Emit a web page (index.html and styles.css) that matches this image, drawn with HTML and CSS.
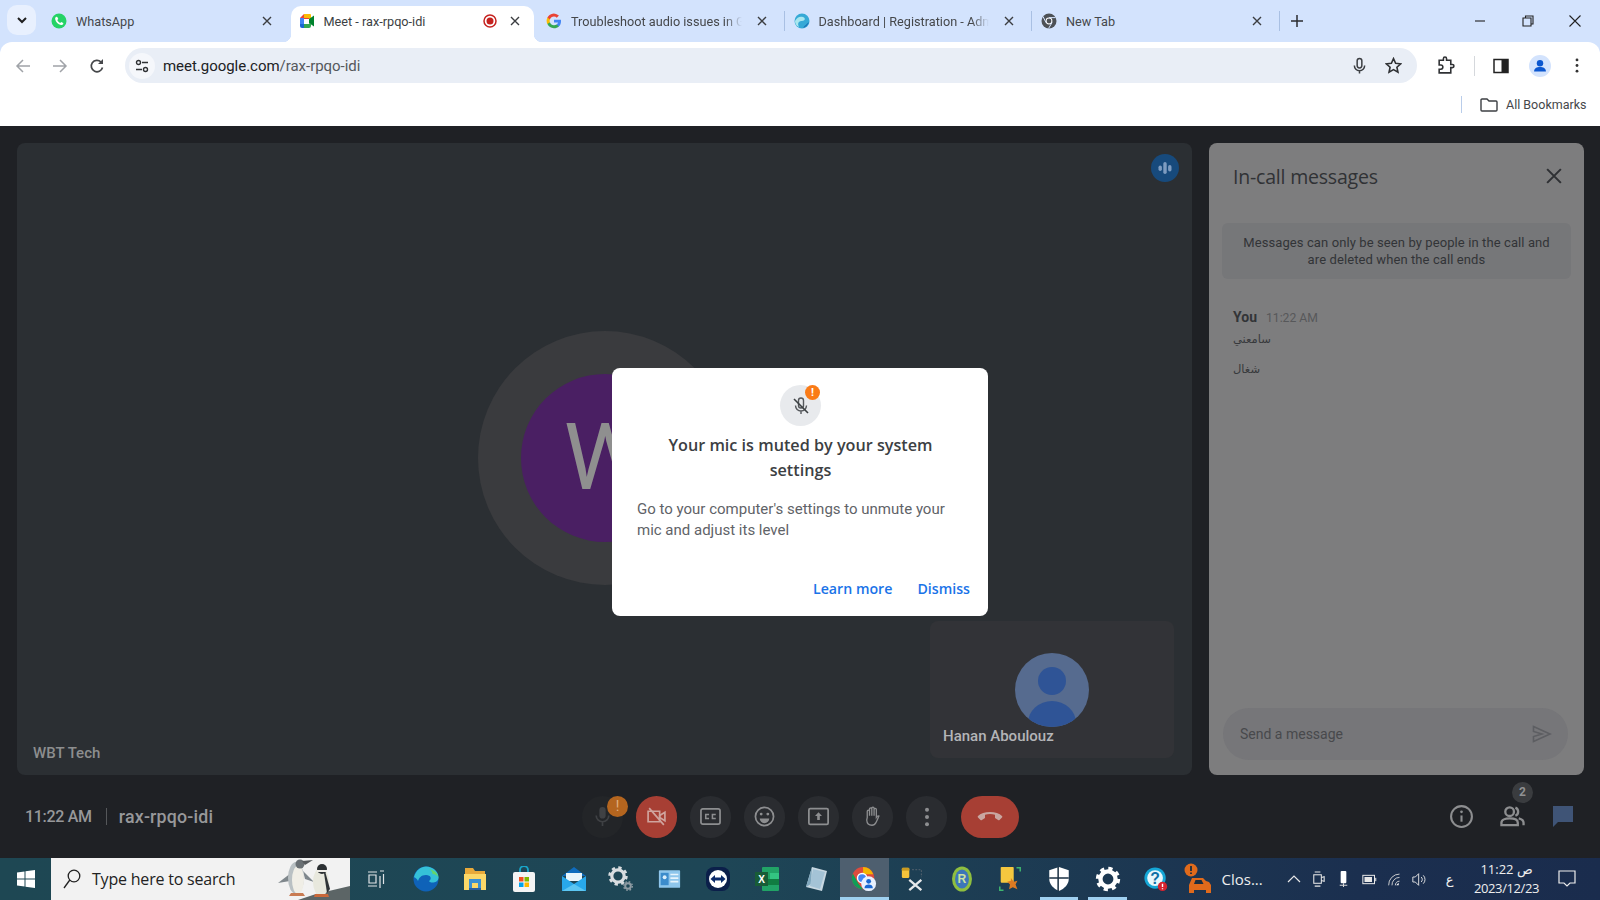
FILE: index.html
```html
<!DOCTYPE html>
<html lang="en">
<head>
<meta charset="utf-8">
<title>Meet - rax-rpqo-idi</title>
<link rel="stylesheet" href="styles.css">
</head>
<body>
<div class="browser">
  <div class="tabstrip">
    <div class="tabsearch"><svg width="12" height="12" viewBox="0 0 12 12"><path d="M2 4l4 4 4-4" fill="none" stroke="#1f1f1f" stroke-width="2"/></svg></div>
    <div class="tab">
      <svg class="favicon" viewBox="0 0 16 16"><circle cx="8" cy="8" r="7.5" fill="#25d366"/><path d="M5.2 3.8c-.8.5-1.2 1.4-1 2.4.5 2.8 2.900 5.200 5.700 5.700 1 .2 1.900-.2 2.400-1l-.1-1-2-1-1 1c-1.200-.5-2.400-1.700-2.900-2.900l1-1-1-2z" fill="#fff"/></svg>
      <span class="tab-title">WhatsApp</span>
      <svg class="tab-x" viewBox="0 0 10 10"><path d="M1 1l8 8M9 1l-8 8"/></svg>
    </div>
    <div class="tab tab-active">
      <svg class="favicon" viewBox="0 0 16 16"><path d="M1 5l4-4h5v5H1z" fill="#ea4335"/><path d="M1 5h4v6H1z" fill="#4285f4"/><path d="M1 11h4v4H3a2 2 0 0 1-2-2z" fill="#1967d2"/><path d="M5 11h5v4H5z" fill="#34a853"/><path d="M5 1h6a1 1 0 0 1 1 1v4H10V5H5z" fill="#fbbc04"/><path d="M10 6l5-3.500v11L10 10z" fill="#00832d"/><path d="M10 10v3a2 2 0 0 1-2 2h2a2 2 0 0 0 2-2v-2z" fill="#34a853"/></svg>
      <span class="tab-title">Meet - rax-rpqo-idi</span>
      <svg class="rec" viewBox="0 0 14 14"><circle cx="7" cy="7" r="6" fill="none" stroke="#c5221f" stroke-width="1.500"/><circle cx="7" cy="7" r="3.500" fill="#c5221f"/></svg>
      <svg class="tab-x" viewBox="0 0 10 10"><path d="M1 1l8 8M9 1l-8 8"/></svg>
    </div>
    <div class="tab tab-sep">
      <svg class="favicon" viewBox="0 0 16 16"><path d="M15 8.200c0-.5 0-1-.1-1.500H8v2.800h4a3.400 3.400 0 0 1-1.500 2.200v1.900h2.400c1.400-1.300 2.100-3.200 2.100-5.400z" fill="#4285f4"/><path d="M8 15.200c2 0 3.600-.7 4.900-1.800l-2.400-1.900c-.7.4-1.500.7-2.500.7-1.900 0-3.500-1.300-4.100-3H1.400v1.900a7.200 7.200 0 0 0 6.600 4.100z" fill="#34a853"/><path d="M3.900 9.200a4.300 4.300 0 0 1 0-2.700V4.600H1.400a7.200 7.200 0 0 0 0 6.500z" fill="#fbbc04"/><path d="M8 3.600c1.100 0 2 .4 2.800 1.100l2.100-2.100A7.200 7.200 0 0 0 1.400 4.600l2.500 1.900c.6-1.700 2.200-2.900 4.100-2.900z" fill="#ea4335"/></svg>
      <span class="tab-title tab-fade">Troubleshoot audio issues in Go</span>
      <svg class="tab-x" viewBox="0 0 10 10"><path d="M1 1l8 8M9 1l-8 8"/></svg>
    </div>
    <div class="tab tab-sep">
      <svg class="favicon" viewBox="0 0 16 16"><circle cx="8" cy="8" r="7.500" fill="#35a9d6"/><path d="M1 8c2-4 5-5 8-4 3 1 2 4-1 4S3 10 5 14C2 13 1 10 1 8z" fill="#a8e6ee"/><path d="M9 15c3-1 5-3 6-6-2 2-4 3-6 6z" fill="#1a6fb5"/></svg>
      <span class="tab-title tab-fade">Dashboard | Registration - Adm</span>
      <svg class="tab-x" viewBox="0 0 10 10"><path d="M1 1l8 8M9 1l-8 8"/></svg>
    </div>
    <div class="tab tab-sep">
      <svg class="favicon" viewBox="0 0 16 16"><circle cx="8" cy="8" r="7.500" fill="#4d5156"/><circle cx="8" cy="8" r="3.400" fill="#fff"/><circle cx="8" cy="8" r="2.400" fill="#4d5156"/><path d="M8 4.600h6.500M5 9.600L2 3.500M11 9.600l-3.400 5.800" stroke="#d3e3fd" stroke-width="1"/></svg>
      <span class="tab-title">New Tab</span>
      <svg class="tab-x" viewBox="0 0 10 10"><path d="M1 1l8 8M9 1l-8 8"/></svg>
    </div>
    <svg class="newtab" viewBox="0 0 12 12"><path d="M6 0v12M0 6h12" stroke="#2b2d30" stroke-width="1.500"/></svg>
    <div class="window-controls">
      <svg viewBox="0 0 12 12"><path d="M1 6h10" stroke="#222" stroke-width="1.100"/></svg>
      <svg viewBox="0 0 12 12"><path d="M3.500 2.500V1h7.500v8H9.500M1 3h8v8H1z" fill="none" stroke="#222" stroke-width="1.100"/></svg>
      <svg viewBox="0 0 12 12"><path d="M.5.500l11 11M11.500.500l-11 11" stroke="#222" stroke-width="1.100"/></svg>
    </div>
  </div>
  <div class="toolbar">
    <svg class="nav-icon" viewBox="0 0 16 16"><path d="M15 8H2M8 2L2 8l6 6" fill="none" stroke="#a0a3a8" stroke-width="1.500"/></svg>
    <svg class="nav-icon" viewBox="0 0 16 16"><path d="M1 8h13M8 2l6 6-6 6" fill="none" stroke="#a0a3a8" stroke-width="1.500"/></svg>
    <svg class="nav-icon" viewBox="0 0 16 16"><path d="M13.500 9.500A5.700 5.700 0 1 1 12 4l1.500 1.500" fill="none" stroke="#45474a" stroke-width="1.700"/><path d="M14 1v5h-5z" fill="#45474a"/></svg>
    <div class="omnibox">
      <div class="tune"><svg viewBox="0 0 14 14"><circle cx="3.500" cy="3.500" r="2" fill="none" stroke="#2f3134" stroke-width="1.400"/><circle cx="10.500" cy="10.500" r="2" fill="none" stroke="#2f3134" stroke-width="1.400"/><path d="M7 3.500h6M1 10.500h6" stroke="#2f3134" stroke-width="1.400"/></svg></div>
      <span class="url">meet.google.com<span class="url-path">/rax-rpqo-idi</span></span>
      <svg class="omni-mic" viewBox="0 0 16 18"><rect x="5.500" y="1" width="5" height="10" rx="2.500" fill="none" stroke="#3c3f43" stroke-width="1.600"/><path d="M2.500 8.500a5.500 5.500 0 0 0 11 0M8 14v3" fill="none" stroke="#3c3f43" stroke-width="1.600"/></svg>
      <svg class="omni-star" viewBox="0 0 16 16"><path d="M8 1.500l2 4.400 4.800.5-3.600 3.200 1 4.700L8 11.900l-4.200 2.400 1-4.700L1.200 6.400 6 5.900z" fill="none" stroke="#2f3134" stroke-width="1.500"/></svg>
    </div>
    <div class="toolbar-actions">
      <svg class="act-ext" viewBox="0 0 18 18"><path d="M3 4h4V2.500a1.500 1.500 0 0 1 3 0V4h4v4h1.500a1.500 1.500 0 0 1 0 3H14v5H3v-3.500h1.500a2 2 0 0 0 0-4H3z" fill="none" stroke="#2f3134" stroke-width="1.500"/></svg>
      <span class="act-sep"></span>
      <svg class="act-side" viewBox="0 0 16 16"><rect x="1" y="1.500" width="14" height="13" fill="none" stroke="#222" stroke-width="1.500"/><rect x="8.500" y="1.500" width="6.500" height="13" fill="#222"/></svg>
      <svg class="act-prof" viewBox="0 0 24 24"><circle cx="12" cy="12" r="12" fill="#d3e3fd"/><circle cx="12" cy="9" r="3.500" fill="#0b57d0"/><path d="M5.500 18c0-3.500 3-5 6.500-5s6.500 1.500 6.500 5z" fill="#0b57d0"/></svg>
      <svg class="act-menu" viewBox="0 0 4 16"><circle cx="2" cy="2" r="1.500" fill="#333"/><circle cx="2" cy="8" r="1.500" fill="#333"/><circle cx="2" cy="14" r="1.500" fill="#333"/></svg>
    </div>
  </div>
  <div class="bookmarks">
    <span class="bm-sep"></span>
    <svg class="bm-folder" viewBox="0 0 18 14"><path d="M1 2a1 1 0 0 1 1-1h5l2 2h7a1 1 0 0 1 1 1v8a1 1 0 0 1-1 1H2a1 1 0 0 1-1-1z" fill="none" stroke="#3c3f43" stroke-width="1.400"/></svg>
    <span class="bm-text">All Bookmarks</span>
  </div>
</div>

<main class="meet">
  <div class="meet-body">
    <section class="stage">
      <svg class="speaking" viewBox="0 0 28 28"><circle cx="14" cy="14" r="14" fill="#174a7c"/><rect x="7.500" y="11.500" width="3.400" height="5.500" rx="1.700" fill="#7e9cc0"/><rect x="12.300" y="8" width="3.400" height="12" rx="1.700" fill="#7e9cc0"/><rect x="17.100" y="11" width="3.400" height="6.500" rx="1.700" fill="#7e9cc0"/></svg>
      <div class="ring"><div class="avatar-big">W</div></div>
      <span class="self-name">WBT Tech</span>
      <div class="tile">
        <svg class="tile-avatar" viewBox="0 0 74 74"><defs><clipPath id="tc"><circle cx="37" cy="37" r="37"/></clipPath></defs><circle cx="37" cy="37" r="37" fill="#566b8f"/><g clip-path="url(#tc)"><ellipse cx="37" cy="28" rx="14" ry="14" fill="#2f5496"/><ellipse cx="37" cy="70" rx="24" ry="22" fill="#2f5496"/></g></svg>
        <span class="tile-name">Hanan Aboulouz</span>
      </div>
    </section>
    <aside class="chat">
      <div class="chat-head">
        <h2 class="chat-title">In-call messages</h2>
        <svg class="chat-close" viewBox="0 0 14 14"><path d="M1 1l12 12M13 1L1 13" stroke="#2e3033" stroke-width="1.800"/></svg>
      </div>
      <p class="chat-note">Messages can only be seen by people in the call and are deleted when the call ends</p>
      <div class="chat-msgs">
        <div class="msg-meta"><b class="msg-you">You</b><span class="msg-time">11:22 AM</span></div>
        <p class="msg" dir="rtl">سامعني</p>
        <p class="msg" dir="rtl">شغال</p>
      </div>
      <div class="chat-input">
        <span class="chat-ph">Send a message</span>
        <svg class="chat-send" viewBox="0 0 20 18"><path d="M1.500 1.500L18 9 1.500 16.500v-5L10 9 1.500 6.500z" fill="none" stroke="#5d5e62" stroke-width="1.600"/></svg>
      </div>
    </aside>
  </div>
  <div class="controls">
    <div class="meeting-info">
      <span class="mi-time">11:22 AM</span>
      <span class="mi-sep"></span>
      <span class="mi-code">rax-rpqo-idi</span>
    </div>
    <div class="center-controls">
      <div class="ctl ctl-mic">
        <svg viewBox="0 0 16 20" class="ctl-i"><rect x="5" y="1" width="6" height="11" rx="3" fill="#3f4144"/><path d="M2 9a6 6 0 0 0 12 0M8 15v4" fill="none" stroke="#3f4144" stroke-width="1.600"/></svg>
        <span class="ctl-warn">!</span>
      </div>
      <div class="ctl ctl-red"><svg class="ctl-i" viewBox="0 0 20 20"><path d="M2 5h11v10H2z" fill="none" stroke="#d0a49e" stroke-width="1.600"/><path d="M13 9l5-3v8l-5-3zM3 2l14 16" fill="none" stroke="#d0a49e" stroke-width="1.600"/></svg></div>
      <div class="ctl"><svg class="ctl-i" viewBox="0 0 22 18"><rect x="1" y="1" width="20" height="16" rx="2" fill="none" stroke="#8d8e90" stroke-width="1.800"/><path d="M9.500 7H6v4h3.500M16.500 7H13v4h3.500" fill="none" stroke="#8d8e90" stroke-width="1.600"/></svg></div>
      <div class="ctl"><svg class="ctl-i" viewBox="0 0 22 22"><circle cx="11" cy="11" r="9.500" fill="none" stroke="#8d8e90" stroke-width="1.800"/><circle cx="7.500" cy="8.500" r="1.500" fill="#8d8e90"/><circle cx="14.500" cy="8.500" r="1.500" fill="#8d8e90"/><path d="M6 13h10a5 5 0 0 1-10 0z" fill="#8d8e90"/></svg></div>
      <div class="ctl"><svg class="ctl-i" viewBox="0 0 24 20"><rect x="1" y="1" width="22" height="18" rx="1.500" fill="none" stroke="#8d8e90" stroke-width="2"/><path d="M12 5l4 4.500h-2.500V14h-3V9.500H8z" fill="#8d8e90"/></svg></div>
      <div class="ctl"><svg class="ctl-i" viewBox="0 0 20 24"><path d="M4 13V6a1.300 1.300 0 0 1 2.600 0v5V3.500a1.300 1.300 0 0 1 2.600 0V11V2.500a1.300 1.300 0 0 1 2.600 0V11V4a1.300 1.300 0 0 1 2.600 0v9c1-1.500 2-2 3-1.500-1 2-2 5-3.500 7.500-1 2-2.500 3-4.500 3-4 0-5.800-2.500-6-6z" fill="none" stroke="#8d8e90" stroke-width="1.500"/></svg></div>
      <div class="ctl"><svg class="ctl-dots" viewBox="0 0 6 22"><circle cx="3" cy="3" r="2.200" fill="#8d8e90"/><circle cx="3" cy="11" r="2.200" fill="#8d8e90"/><circle cx="3" cy="19" r="2.200" fill="#8d8e90"/></svg></div>
      <div class="ctl-end"><svg viewBox="0 0 26 12"><path d="M13 1C8 1 3.500 2.500 1 5c-.5.500-.5 1 0 1.500L3.500 9c.4.400 1 .4 1.400.1L8 7V3.800c1.500-.5 3.200-.8 5-.8s3.500.3 5 .8V7l3.100 2.100c.4.300 1 .3 1.400-.1L25 6.500c.5-.5.5-1 0-1.500C22.500 2.500 18 1 13 1z" fill="#c9a6a0"/></svg></div>
    </div>
    <div class="right-controls">
      <svg class="rc-i" viewBox="0 0 24 24"><circle cx="12" cy="12" r="10" fill="none" stroke="#8d8e90" stroke-width="2"/><path d="M12 11v6" stroke="#8d8e90" stroke-width="2"/><circle cx="12" cy="7.500" r="1.300" fill="#8d8e90"/></svg>
      <div class="people">
        <span class="people-badge">2</span>
        <svg class="rc-i" viewBox="0 0 26 24"><circle cx="10" cy="7" r="4.500" fill="none" stroke="#8d8e90" stroke-width="2.400"/><path d="M1.500 21v-2.500c0-3 4-4.500 8.500-4.500s8.500 1.500 8.500 4.500V21z" fill="none" stroke="#8d8e90" stroke-width="2.400"/><path d="M16 2.800a4.500 4.500 0 0 1 0 8.400M19.500 14c3 .8 5 2.300 5 4.500V21" fill="none" stroke="#8d8e90" stroke-width="2.400"/></svg>
      </div>
      <svg class="rc-chat" viewBox="0 0 22 24"><path d="M1 1h20v16H6l-5 5z" fill="#3f5476"/></svg>
    </div>
  </div>
  <div class="dialog" role="dialog">
    <div class="dialog-icon">
      <svg viewBox="0 0 20 20" class="dialog-mic"><rect x="7.500" y="2" width="5" height="10" rx="2.500" fill="none" stroke="#55585c" stroke-width="1.400"/><path d="M4.500 9.500a5.500 5.500 0 0 0 11 0M10 15v3" fill="none" stroke="#55585c" stroke-width="1.400"/><path d="M3 3l14 14" stroke="#3c4043" stroke-width="1.600"/></svg>
      <span class="dialog-badge">!</span>
    </div>
    <h3 class="dialog-title">Your mic is muted by your system settings</h3>
    <p class="dialog-text">Go to your computer's settings to unmute your mic and adjust its level</p>
    <div class="dialog-actions">
      <span class="dialog-btn">Learn more</span>
      <span class="dialog-btn">Dismiss</span>
    </div>
  </div>
</main>

<footer class="taskbar">
  <div class="tb-start"><svg viewBox="0 0 18 18"><path d="M0 2.500L7.500 1.500v7H0zM8.500 1.300L18 0v8.500H8.500zM0 9.500h7.500v7L0 15.500zM8.500 9.500H18V18l-9.500-1.300z" fill="#fff"/></svg></div>
  <div class="tb-search">
    <svg class="tb-mag" viewBox="0 0 18 20"><circle cx="11" cy="7" r="5.800" fill="none" stroke="#222" stroke-width="1.300"/><path d="M6.800 11L1 19" stroke="#222" stroke-width="1.300"/></svg>
    <span class="tb-search-text">Type here to search</span>
    <svg class="tb-art" viewBox="0 0 74 42"><path d="M22 42l18-6 34-8v14z" fill="#5c6566"/><path d="M2 25l13-10-1 8z" fill="#7f878c"/><path d="M27 13l11 11-9-3z" fill="#7f878c"/><ellipse cx="20" cy="20" rx="8" ry="16" fill="#b9c0c3"/><ellipse cx="22" cy="22" rx="6" ry="14" fill="#f0eee6"/><circle cx="24" cy="6" r="4.500" fill="#6a7074"/><path d="M26 3l11-1-8 5z" fill="#55595c"/><path d="M15 35h12l2 3H13z" fill="#c97b52"/><ellipse cx="45" cy="24" rx="8" ry="14" fill="#e8e8dd"/><path d="M49 13l5 18-3 4-3-20z" fill="#2f3336"/><circle cx="46" cy="11" r="5" fill="#2c3033"/><path d="M41 12h10v2H41z" fill="#f0eee8"/><path d="M39 36h13l1 3H38z" fill="#c9683a"/></svg>
  </div>
  <div class="tb-taskview"><svg viewBox="0 0 18 18"><path d="M1 2h9M1 16h9M2 5h7v8H2zM13 1h4M13 6v12M16.500 4v10" fill="none" stroke="#dfe3e6" stroke-width="1.200"/></svg></div>
  <div class="tb-app"><svg viewBox="0 0 26 26"><circle cx="13" cy="13" r="12.500" fill="#0f62b8"/><path d="M1 11C3 4 8 .5 13 .5c7 0 12.500 5 12.500 11 0 4-3.500 5-6 5-2 0-3.500-.7-3.500-1.500 3-2 2-6-3-6-5 0-7 3-8 6-1-2-2.500-3.500-4.500-4z" fill="#35c1d8"/><path d="M16 3c5 1 9 4 9.500 9-1-3-4-4-6-4 0-2-1-4-3.500-5z" fill="#65d56b"/></svg></div>
  <div class="tb-app"><svg viewBox="0 0 24 26"><path d="M2 2h8l2 3h10v18H2z" fill="#e8a93a"/><path d="M1 8h22v16H1z" fill="#fbd768"/><path d="M6 13h12v9H6z" fill="#3a8fd3"/><path d="M9 17h6v5H9z" fill="#fbd768"/><path d="M6 22h12v2H6z" fill="#2a5f9f"/></svg></div>
  <div class="tb-app"><svg viewBox="0 0 24 26"><path d="M8 7V4a4 4 0 0 1 8 0v3" fill="none" stroke="#19a6c9" stroke-width="1.800"/><rect x="1" y="6" width="22" height="20" rx="2" fill="#f4f4f4"/><rect x="7" y="11" width="4.500" height="4.500" fill="#f25022"/><rect x="12.500" y="11" width="4.500" height="4.500" fill="#7fba00"/><rect x="7" y="16.500" width="4.500" height="4.500" fill="#00a4ef"/><rect x="12.500" y="16.500" width="4.500" height="4.500" fill="#ffb900"/></svg></div>
  <div class="tb-app tb-mail"><svg viewBox="0 0 26 26"><path d="M13 1L1 10h24z" fill="#0f6cbd"/><path d="M5 7h16v8H5z" fill="#e8f5fb"/><path d="M1 10l12 8 12-8v15H1z" fill="#28a8ea"/><path d="M1 25l12-7 12 7z" fill="#5cc6f2"/></svg></div>
  <div class="tb-app"><svg viewBox="0 0 26 26"><circle cx="10" cy="10" r="6.200" fill="none" stroke="#d9dde0" stroke-width="3.200"/><circle cx="10" cy="10" r="8.400" fill="none" stroke="#d9dde0" stroke-width="2.600" stroke-dasharray="3.300 3.300"/><circle cx="20" cy="20" r="2.800" fill="none" stroke="#8d9aa2" stroke-width="2"/><circle cx="20" cy="20" r="4.300" fill="none" stroke="#8d9aa2" stroke-width="1.400" stroke-dasharray="1.700 1.700"/></svg></div>
  <div class="tb-app tb-small"><svg viewBox="0 0 26 22"><rect x="1" y="1" width="24" height="20" rx="1" fill="#8ec6ec"/><rect x="3" y="4" width="9" height="14" fill="#3c8ccc"/><circle cx="7.500" cy="9" r="2.200" fill="#d9eefb"/><path d="M14 6h9M14 10h9M14 14h9" stroke="#e7f4fc" stroke-width="1.800"/></svg></div>
  <div class="tb-app"><svg viewBox="0 0 26 26"><rect x="1" y="1" width="24" height="24" rx="8" fill="#0b1f4a"/><circle cx="13" cy="13" r="9" fill="#fff"/><path d="M5.500 13L10 9v2.500h6V9l4.500 4-4.500 4v-2.500h-6V17z" fill="#0b2a6a"/></svg></div>
  <div class="tb-app"><svg viewBox="0 0 26 26"><rect x="8" y="1" width="17" height="24" rx="1" fill="#21a366"/><rect x="16" y="7" width="9" height="6" fill="#33c481"/><rect x="8" y="13" width="17" height="6" fill="#107c41"/><rect x="1" y="6" width="13" height="14" fill="#185c37"/><text x="7.500" y="17" class="tb-x">X</text></svg></div>
  <div class="tb-app"><svg viewBox="0 0 24 26"><path d="M8 1l15 4-5 20L2 21z" fill="#c8d8e2"/><path d="M8 1L2 21l5-3z" fill="#7fa7bd"/><path d="M9 3l12 3-5 17-10-3z" fill="#a4c3d6"/></svg></div>
  <div class="tb-app tb-active"><svg viewBox="0 0 28 28"><circle cx="13" cy="13" r="12" fill="#dd4b3e"/><path d="M13 1a12 12 0 0 1 11 8H13z" fill="#f4b400"/><path d="M2 8l6 11 5 6a12 12 0 0 1-11-17z" fill="#0f9d58"/><circle cx="12" cy="13" r="5" fill="#4285f4" stroke="#fff" stroke-width="1.500"/><circle cx="19" cy="19" r="8" fill="#e8f0fe"/><circle cx="19" cy="16.500" r="2.600" fill="#1967d2"/><path d="M14.500 24c0-3 2-4 4.500-4s4.500 1 4.500 4z" fill="#1967d2"/></svg></div>
  <div class="tb-app"><svg viewBox="0 0 26 28"><rect x="1" y="2" width="8" height="11" rx="1.500" fill="#f5c33b"/><rect x="1" y="2" width="8" height="3" fill="#c99a1f"/><path d="M9 15l13 11M22 15L9 26" stroke="#e6e8ea" stroke-width="2.500"/><path d="M12 4h10v8" fill="none" stroke="#5a6670" stroke-width="1" stroke-dasharray="2 1.500"/></svg></div>
  <div class="tb-app"><svg viewBox="0 0 24 30"><ellipse cx="12" cy="15" rx="11.500" ry="14.500" fill="#8fbf3f"/><ellipse cx="12" cy="15" rx="8" ry="11" fill="#3d76b8"/><text x="12" y="20" class="tb-r">R</text></svg></div>
  <div class="tb-app"><svg viewBox="0 0 26 28"><rect x="3" y="1" width="14" height="17" rx="1" fill="#f5c73f"/><path d="M14 13l3 4 4-1-2 4 2 5-5-2-4 2 1-5-3-3 4-1z" fill="#dd7a22"/><path d="M2 22v4h4M20 2h4v4" fill="none" stroke="#3fb56f" stroke-width="1.600"/></svg></div>
  <div class="tb-app tb-underline"><svg viewBox="0 0 20 24"><path d="M10 1l9 3v8c0 5-4 9-9 11-5-2-9-6-9-11V4z" fill="#fff"/><path d="M9.200 1v22M1 11h18" stroke="#1d3244" stroke-width="1.400"/></svg></div>
  <div class="tb-app tb-underline"><svg viewBox="0 0 24 24"><circle cx="12" cy="12" r="7" fill="none" stroke="#fff" stroke-width="4"/><circle cx="12" cy="12" r="9.500" fill="none" stroke="#fff" stroke-width="3.500" stroke-dasharray="3.800 3.660"/></svg></div>
  <div class="tb-app"><svg viewBox="0 0 26 28"><circle cx="12" cy="13" r="11.500" fill="#15a6d6"/><circle cx="12" cy="13" r="8.500" fill="#e9f7fc"/><text x="12" y="19" class="tb-q">?</text><circle cx="20" cy="22" r="5" fill="#d7232f"/><path d="M20 19v3.500M20 24v1" stroke="#fff" stroke-width="1.500"/></svg></div>
  <div class="tb-car">
    <svg class="tb-car-i" viewBox="0 0 28 32"><circle cx="7" cy="7" r="6.500" fill="#e06a1b"/><path d="M7 3v5M7 9.500v1.500" stroke="#1b2e3f" stroke-width="1.800"/><path d="M5 22l3-7h11l3 3 3 1 2 3v8h-5v-3H10v3H5z" fill="#e06a1b"/><path d="M10 21l1.500-4h6l2 4z" fill="#1b2e3f"/></svg>
    <span class="tb-car-text">Clos...</span>
  </div>
  <div class="tray">
    <svg class="tray-chev" viewBox="0 0 14 8"><path d="M1 7l6-6 6 6" fill="none" stroke="#e8e8e8" stroke-width="1.200"/></svg>
    <svg class="tray-i" viewBox="0 0 14 18"><rect x="2" y="4" width="8" height="9" fill="none" stroke="#e8e8e8" stroke-width="1.100"/><path d="M10 7l3-1v5l-3-1M3 1h6M3 16h6" fill="none" stroke="#e8e8e8" stroke-width="1.100"/></svg>
    <svg class="tray-i" viewBox="0 0 14 18"><rect x="4" y="0" width="6" height="13" rx="1" fill="#fff"/><path d="M3 15h8M7 13v4" stroke="#d8d8d8" stroke-width="1.100"/></svg>
    <svg class="tray-i tray-bat" viewBox="0 0 18 14"><rect x="1" y="2" width="14" height="10" fill="none" stroke="#e8e8e8" stroke-width="1.200"/><rect x="3" y="4" width="9" height="6" fill="#e8e8e8"/><path d="M16.500 5v4" stroke="#e8e8e8" stroke-width="1.200"/></svg>
    <svg class="tray-i" viewBox="0 0 18 16"><path d="M2 15A13 13 0 0 1 15 1.500M6 15a9 9 0 0 1 9-9.500M10 15a5 5 0 0 1 5-5" fill="none" stroke="#d8d8d8" stroke-width="1.100"/><path d="M14 15v-3l-3 3z" fill="#fff"/></svg>
    <svg class="tray-i" viewBox="0 0 18 16"><path d="M1 5h3l4-4v14l-4-4H1z" fill="none" stroke="#e8e8e8" stroke-width="1.100"/><path d="M11 5a4 4 0 0 1 0 6M13.500 3a7 7 0 0 1 0 10" fill="none" stroke="#e8e8e8" stroke-width="1.100"/></svg>
    <span class="tray-lang">ع</span>
    <div class="tray-clock"><span dir="ltr">11:22 ص</span><span>2023/12/23</span></div>
    <svg class="tray-note" viewBox="0 0 18 18"><path d="M1 1h16v12h-5l-3 3-3-3H1z" fill="none" stroke="#eee" stroke-width="1.200"/></svg>
  </div>
</footer>
</body>
</html>
```

FILE: styles.css
```css
* { box-sizing: border-box; }
html, body { margin: 0; padding: 0; }
body { width: 1600px; height: 900px; overflow: hidden; font-family: Roboto, "Liberation Sans", sans-serif; background: #1f2125; display: flex; flex-direction: column; }
h2, h3, p { margin: 0; font-weight: 400; }

.browser { height: 126px; background: #d3e3fd; flex: none; }
.tabstrip { height: 42px; background: #d3e3fd; display: flex; align-items: flex-end; padding-left: 7px; }
.tabsearch { width: 29px; height: 30px; margin: 0 7px 7px 0; background: #e8f0fe; border-radius: 10px; display: flex; align-items: center; justify-content: center; }
.tab { width: 247.5px; height: 36px; display: flex; align-items: center; padding: 0 18px 6px 8px; gap: 9px; font-size: 12.700px; color: #45474a; position: relative; flex: none; }
.tab-active { background: #fff; border-radius: 10px 10px 0 0; color: #3c3f43; width: 243px; margin-right: 4.5px; padding-right: 13px; z-index: 1; }
.tab-active::before, .tab-active::after { content: ""; position: absolute; bottom: 0; width: 8px; height: 8px; }
.tab-active::before { left: -8px; background: radial-gradient(circle at 0 0, transparent 8px, #fff 8.500px); }
.tab-active::after { right: -8px; background: radial-gradient(circle at 100% 0, transparent 8px, #fff 8.500px); }
.tab-active .tab-x { margin-left: 3px; }
.tab-sep::after { content: ""; position: absolute; right: 1px; top: 5px; height: 20px; width: 1px; background: #a9c0e3; }
.favicon { width: 16px; height: 16px; flex: none; }
.tab-title { flex: 1; white-space: nowrap; overflow: hidden; min-width: 0; }
.tab-fade { -webkit-mask-image: linear-gradient(90deg, #000 90%, transparent); mask-image: linear-gradient(90deg, #000 90%, transparent); }
.tab-x { width: 10px; height: 10px; flex: none; margin-left: 6px; margin-right: 1px; }
.tab-x path { stroke: #3b3d40; stroke-width: 1.400; fill: none; }
.rec { width: 14px; height: 14px; flex: none; margin-right: 1px; }
.newtab { width: 12px; height: 12px; margin: 0 0 15px 10px; flex: none; }
.window-controls { margin-left: auto; display: flex; gap: 35.500px; padding-right: 19px; margin-bottom: 15px; }
.window-controls svg { width: 12px; height: 12px; display: block; }

.toolbar { height: 47px; display: flex; align-items: center; padding: 0 17px 0 15px; background: #fff; border-radius: 12px 12px 0 0; }
.nav-icon { width: 16px; height: 16px; flex: none; margin-right: 21px; }
.omnibox { height: 35px; width: 1292px; margin-left: -1px; background: #e9eef6; border-radius: 18px; display: flex; align-items: center; padding: 0 15px 0 4px; flex: none; }
.tune { width: 26px; height: 26px; background: #f5f7fb; border-radius: 50%; display: flex; align-items: center; justify-content: center; flex: none; }
.tune svg { width: 14px; height: 14px; }
.url { margin-left: 8px; font-size: 15px; color: #202124; flex: 1; letter-spacing: -.03px; }
.url-path { color: #55585c; }
.omni-mic { width: 15px; height: 18px; margin-right: 18px; flex: none; }
.omni-star { width: 17px; height: 17px; flex: none; }
.toolbar-actions { display: flex; align-items: center; flex: 1; padding-left: 19px; }
.act-ext { width: 19px; height: 19px; flex: none; }
.act-sep { width: 1px; height: 20px; background: #d5d8dc; margin: 0 18px 0 18.500px; flex: none; }
.act-side { width: 16px; height: 16px; margin-right: 20px; flex: none; }
.act-prof { width: 22px; height: 22px; margin-right: 26px; flex: none; }
.act-menu { width: 4px; height: 15px; flex: none; margin-left: -2px; }
.bookmarks { height: 37px; display: flex; align-items: center; justify-content: flex-end; padding: 0 16px 6px 0; background: #fff; }
.bm-sep { width: 1px; height: 17px; background: #b9cdea; margin-right: 18px; }
.bm-folder { width: 18px; height: 14px; margin-right: 8px; }
.bm-text { font-size: 12.500px; color: #45474a; width: 78px; white-space: nowrap; }

.meet { flex: 1; position: relative; display: flex; flex-direction: column; background: #1f2125; padding-top: 17px; min-height: 0; }
.meet-body { display: flex; gap: 17px; padding: 0 16px 0 17px; height: 632px; flex: none; }
.stage { width: 1175px; background: #2b2f33; border-radius: 8px; position: relative; display: flex; align-items: center; justify-content: center; padding-bottom: 1px; }
.speaking { width: 28px; height: 28px; position: absolute; top: 11px; right: 13px; }
.ring { width: 254px; height: 254px; border-radius: 50%; background: #3a3b3e; display: flex; align-items: center; justify-content: center; margin-top: -1px; }
.avatar-big { width: 168px; height: 168px; border-radius: 50%; background: #4a1f63; color: #8f8f8f; font-size: 92px; line-height: 168px; text-align: center; font-family: Roboto, sans-serif; }
.self-name { position: absolute; left: 16px; bottom: 13px; color: #8d8e8f; font-size: 15px; font-weight: 500; }
.tile { position: absolute; right: 18px; bottom: 17px; width: 244px; height: 137px; background: #323337; border-radius: 8px; display: flex; flex-direction: column; align-items: center; padding-top: 32px; }
.tile-avatar { width: 74px; height: 74px; flex: none; }
.tile-name { position: absolute; left: 13px; bottom: 13px; color: #b4b5b7; font-size: 15px; font-weight: 500; }

.chat { width: 375px; background: #7d7d7e; border-radius: 8px; display: flex; flex-direction: column; color: #2e3033; padding: 0 13px; }
.chat-head { display: flex; align-items: center; justify-content: space-between; height: 66px; padding: 0 9px 0 11px; }
.chat-title { font-size: 19.500px; font-family: "Open Sans", Roboto, sans-serif; color: #303235; letter-spacing: -.2px; }
.chat-close { width: 16px; height: 16px; }
.chat-note { margin-top: 14px; height: 56px; background: #767779; border-radius: 6px; font-size: 13px; line-height: 17px; text-align: center; padding: 11px 14px 0; color: #323437; letter-spacing: .1px; }
.chat-msgs { padding: 30px 11px 0; flex: 1; }
.msg-meta { display: flex; align-items: baseline; gap: 9px; }
.msg-you { font-size: 14px; font-weight: 700; color: #323437; }
.msg-time { font-size: 12.200px; color: #57585a; }
.msg { font-size: 11.500px; line-height: 18px; margin-top: 5px; margin-bottom: 12px; color: #37393c; text-align: left; font-family: "DejaVu Sans", sans-serif; }
.chat-input { height: 52px; margin: 0 3px 15px 1px; background: #767679; border-radius: 26px; display: flex; align-items: center; justify-content: space-between; padding: 0 16px 0 17px; }
.chat-ph { font-size: 14px; color: #48494c; }
.chat-send { width: 20px; height: 18px; }

.controls { flex: 1; display: flex; align-items: center; position: relative; padding: 0 26px 0 25px; }
.meeting-info { display: flex; align-items: center; color: #97989a; font-weight: 500; width: 557px; flex: none; }
.mi-time { font-size: 16px; letter-spacing: -.3px; }
.mi-code { font-size: 17.800px; letter-spacing: .2px; }
.mi-sep { width: 1px; height: 17px; background: #55575a; margin: 0 12px 0 14px; }
.center-controls { display: flex; align-items: center; gap: 13px; }
.ctl { width: 41px; height: 42px; border-radius: 21px; background: #2a2c30; display: flex; align-items: center; justify-content: center; position: relative; }
.ctl-mic { background: #232528; }
.ctl-i { width: 21px; height: 21px; }
.ctl-dots { width: 6px; height: 20px; }
.ctl-warn { position: absolute; top: 0; right: -5px; width: 21px; height: 21px; border-radius: 50%; background: #b4651f; color: #e0b080; font-size: 14px; text-align: center; line-height: 21px; }
.ctl-red { background: #a73f34; }
.ctl-end { width: 58px; height: 42px; border-radius: 21px; background: #a73f34; display: flex; align-items: center; justify-content: center; margin-left: 1px; }
.ctl-end svg { width: 26px; height: 12px; }
.right-controls { margin-left: auto; display: flex; align-items: center; gap: 26px; }
.rc-i { width: 25px; height: 25px; display: block; }
.rc-chat { width: 22px; height: 24px; margin-left: 1px; }
.people { position: relative; }
.people-badge { position: absolute; top: -22px; left: 12px; width: 21px; height: 21px; border-radius: 50%; background: #3a3c3f; color: #909193; font-size: 12px; font-weight: 700; text-align: center; line-height: 21px; }

.dialog { position: absolute; left: 612px; top: 242px; width: 376px; height: 248px; background: #fff; border-radius: 8px; padding: 17px 24px 0 25px; display: flex; flex-direction: column; align-items: center; }
.dialog-icon { width: 41px; height: 41px; background: #e8eaed; border-radius: 50%; display: flex; align-items: center; justify-content: center; position: relative; flex: none; }
.dialog-mic { width: 20px; height: 20px; }
.dialog-badge { position: absolute; top: 0; right: 1px; width: 15px; height: 15px; border-radius: 50%; background: #fa7b17; color: #fff; font-size: 11px; font-weight: 700; text-align: center; line-height: 15px; }
.dialog-title { font-family: "Open Sans", Roboto, sans-serif; font-size: 16.200px; line-height: 25px; color: #3c4043; text-align: center; font-weight: 600; margin-top: 7px; width: 290px; }
.dialog-text { font-size: 15px; line-height: 21px; color: #5f6368; margin-top: 16px; width: 100%; }
.dialog-actions { margin-top: auto; margin-bottom: 18px; margin-right: -6px; align-self: flex-end; display: flex; justify-content: flex-end; gap: 25px; }
.dialog-btn { font-family: "Open Sans", Roboto, sans-serif; font-size: 14.200px; font-weight: 600; color: #1a73e8; }

.taskbar { height: 42px; flex: none; background: linear-gradient(90deg, #1e4753 0%, #1e4656 45%, #1b2f4f 85%, #1a2c4d 100%); display: flex; align-items: center; color: #fff; }
.tb-start { width: 51px; height: 42px; display: flex; align-items: center; justify-content: center; flex: none; }
.tb-start svg { width: 18px; height: 18px; }
.tb-search { width: 299px; height: 42px; background: #f2f2f2; display: flex; align-items: center; padding-left: 12px; position: relative; flex: none; overflow: hidden; }
.tb-mag { width: 18px; height: 20px; flex: none; }
.tb-search-text { margin-left: 11px; font-size: 16px; color: #222; font-family: "Open Sans", Roboto, sans-serif; letter-spacing: -.2px; }
.tb-art { position: absolute; right: 0; bottom: 0; width: 74px; height: 42px; }
.tb-taskview { width: 52px; height: 42px; display: flex; align-items: center; justify-content: center; flex: none; }
.tb-taskview svg { width: 18px; height: 18px; }
.tb-app { width: 48.670px; height: 42px; display: flex; align-items: center; justify-content: center; flex: none; position: relative; }
.tb-app svg { width: 26px; height: 26px; }
.tb-small svg { width: 23px; height: 20px; }
.tb-mail svg { margin-left: 3px; }
.tb-active { background: #4e5f6f; }
.tb-active::after, .tb-underline::after { content: ""; position: absolute; left: 5px; right: 5px; bottom: 0; height: 3px; background: #9fd0f0; }
.tb-active::after { left: 0; right: 0; }
.tb-x { font: 700 10px "Liberation Sans", sans-serif; fill: #fff; text-anchor: middle; }
.tb-r { font: 700 14px "Liberation Sans", sans-serif; fill: #cfe3a0; text-anchor: middle; }
.tb-q { font: 700 17px "Liberation Sans", sans-serif; fill: #0f6fa5; text-anchor: middle; }
.tb-car { display: flex; align-items: center; margin-left: 3px; flex: none; }
.tb-car-i { width: 28px; height: 32px; flex: none; }
.tb-car-text { margin-left: 10px; font-size: 15px; color: #eee; font-family: "Open Sans", Roboto, sans-serif; }
.tray { flex: 1; display: flex; align-items: center; padding-left: 24px; }
.tray-chev { width: 14px; height: 8px; flex: none; }
.tray-i { width: 15px; height: 17px; margin-left: 10px; flex: none; }
.tray-bat { margin-left: 11px; }
.tray-lang { margin-left: 19px; font-size: 13px; color: #eee; font-family: "DejaVu Sans", sans-serif; }
.tray-clock { margin-left: 19px; width: 68px; display: flex; flex-direction: column; align-items: center; font-size: 13px; line-height: 19px; color: #eee; font-family: "Open Sans", "DejaVu Sans", sans-serif; letter-spacing: -.4px; white-space: nowrap; }
.tray-note { width: 18px; height: 18px; margin-left: 17px; flex: none; }
```
